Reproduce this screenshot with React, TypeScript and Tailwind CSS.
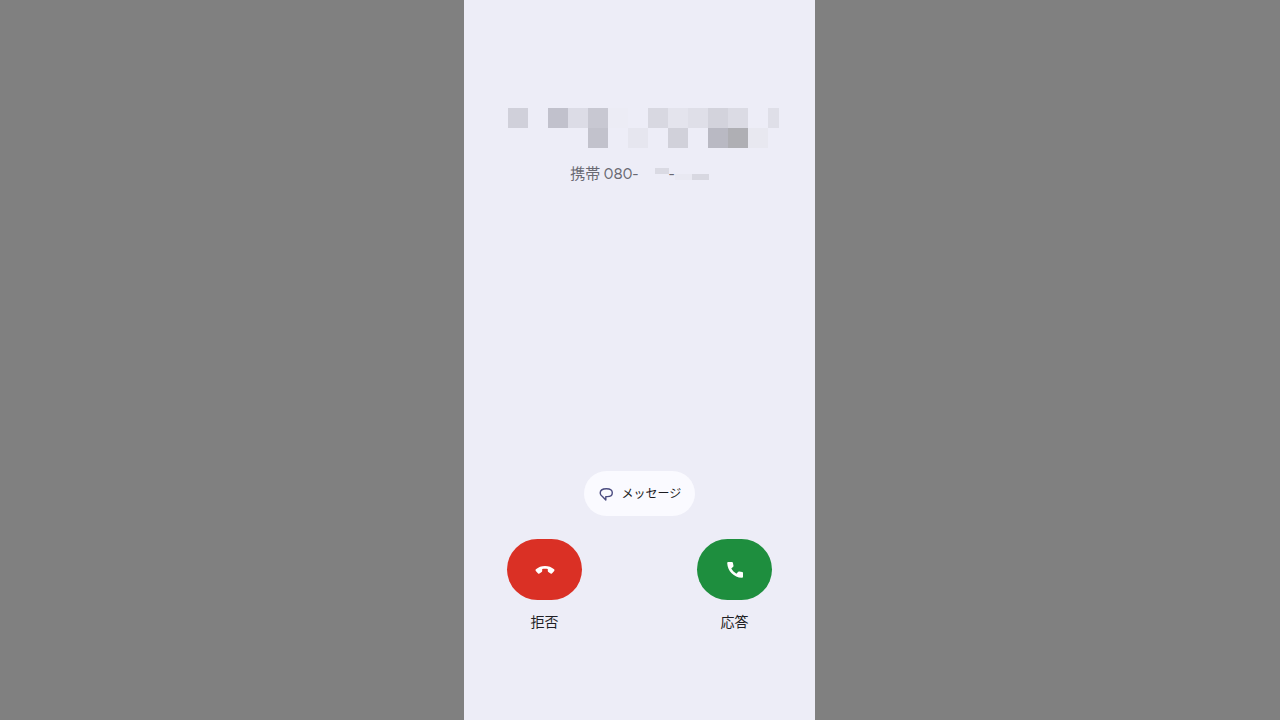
// Masked caller name, one entry per 20px tile
const nameTiles = [
  ['bg-[#d0d0da]', '', 'bg-[#c1c1cc]', 'bg-[#dcdce6]', 'bg-[#c8c8d2]', 'bg-[#ececf5]', '', 'bg-[#d8d8e1]', 'bg-[#e4e4ed]', 'bg-[#dfdfe8]', 'bg-[#d3d3dc]', 'bg-[#dbdbe4]', '', 'bg-[#dfdfe8]'],
  ['', '', '', '', 'bg-[#c2c2cc]', '', 'bg-[#e6e6ef]', '', 'bg-[#d1d1da]', '', 'bg-[#b9b9c3]', 'bg-[#afafb4]', 'bg-[#e8e8f0]', ''],
]

function BubbleIcon() {
  return (
    <svg className="h-4 w-4" viewBox="0 0 16 16" fill="none" stroke="#4b4c80" strokeWidth="1.4" strokeLinejoin="round" aria-hidden="true">
      <path d="M7.800 10.600V14L4.200 10.300C2.800 9.700 2.200 8.500 2.200 7.100C2.200 4.200 4.400 2.700 8.400 2.700C12.400 2.700 14.300 4.200 14.300 6.700C14.300 9.200 12.300 10.600 9.300 10.600Z" />
    </svg>
  )
}

function DeclineIcon() {
  return (
    <svg className="h-5 w-5" viewBox="0 0 20 20" fill="currentColor" aria-hidden="true">
      <path d="M10 5.900C13.500 5.900 16.700 7.100 19.100 9.300Q19.900 10.100 19.200 10.900L16.900 13.500Q16.300 14.100 15.600 13.600L13.300 11.900Q12.800 11.500 12.800 11V9.100C11 8.700 9 8.700 7.200 9.100V11Q7.200 11.500 6.700 11.900L4.400 13.600Q3.700 14.100 3.100 13.500L0.800 10.900Q0.100 10.100 0.900 9.300C3.300 7.100 6.500 5.900 10 5.900Z" />
    </svg>
  )
}

function AnswerIcon() {
  return (
    <svg className="h-5 w-5" viewBox="0 0 20 20" fill="currentColor" aria-hidden="true">
      <path d="M3.200 2H6.900Q7.700 2 7.900 2.800L8.500 5.700Q8.600 6.300 8.200 6.800L6.300 8.600C7.500 10.700 9.300 12.500 11.400 13.700L13.200 11.800Q13.700 11.400 14.300 11.500L17.200 12.100Q18 12.300 18 13.100V16.800Q18 17.800 17 17.800C8.800 17.400 2.600 11.200 2.200 3Q2.200 2 3.200 2Z" />
    </svg>
  )
}

const actions = [
  { id: 'decline', label: '拒否', icon: DeclineIcon, bg: 'bg-[#da3025]' },
  { id: 'answer', label: '応答', icon: AnswerIcon, bg: 'bg-[#1e8e3e]' },
]

export default function App() {
  return (
    <div className="flex min-h-screen justify-center bg-[#808080] pr-px font-['Lato','Noto_Sans_CJK_JP',sans-serif]">
      <main className="flex w-full max-w-[351px] flex-col justify-between bg-[#ededf7] pt-[108px] pb-[88px]">
        <header>
          <div className="overflow-hidden pr-9 pl-11" aria-hidden="true">
            {nameTiles.map((row, y) => (
              <div key={y} className="flex overflow-hidden">
                {row.map((tile, x) => (
                  <span key={x} className={`h-5 w-5 shrink-0 ${tile}`} />
                ))}
              </div>
            ))}
          </div>

          <p className="mt-4 flex items-center justify-center font-['Figtree','Lato','Noto_Sans_CJK_JP',sans-serif] text-[15px] leading-5 text-[#696972]">
            <span className="mr-4">携帯 080-</span>
            <span className="mb-1.5 h-1.5 w-3.5 bg-[#dadae3]" />
            <span>-</span>
            <span className="mt-1.5 h-1.5 w-[17px] bg-[#e9e9f2]" />
            <span className="mt-1.5 h-1.5 w-[17px] bg-[#d8d8e1]" />
          </p>
        </header>

        <section className="flex flex-col">
          <button type="button" className="flex h-[45px] w-[111px] items-center justify-center gap-2 self-center rounded-full bg-[#fafaff] text-xs text-[#1b1b21]">
            <BubbleIcon />
            メッセージ
          </button>

          <div className="mt-[23px] flex justify-between px-[43px]">
            {actions.map((action) => {
              const Icon = action.icon
              return (
                <div key={action.id} className="flex flex-col items-center gap-3">
                  <button
                    type="button"
                    aria-labelledby={action.id}
                    className={`flex h-[61px] w-[75px] items-center justify-center rounded-full text-white ${action.bg}`}
                  >
                    <Icon />
                  </button>
                  <span id={action.id} className="text-sm leading-5 text-[#1f1f25]">{action.label}</span>
                </div>
              )
            })}
          </div>
        </section>
      </main>
    </div>
  )
}
